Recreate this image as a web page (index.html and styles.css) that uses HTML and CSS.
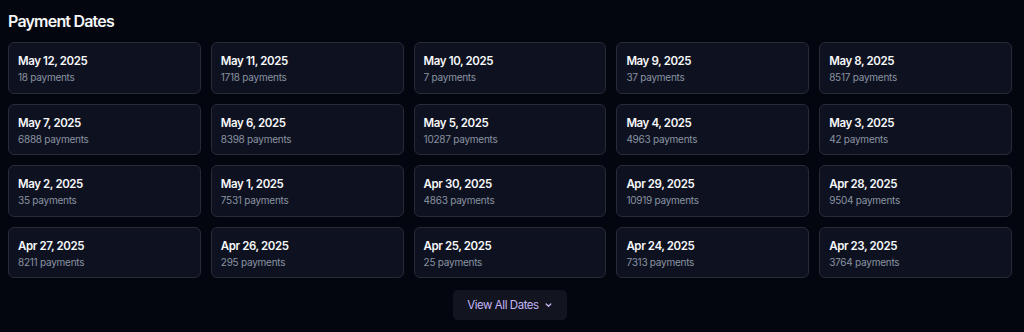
FILE: index.html
```html
<!DOCTYPE html>
<html>
<head>
<meta charset="utf-8">
<link rel="stylesheet" href="styles.css">
</head>
<body>
<section class="dates">
  <h2 class="title">Payment Dates</h2>
  <div class="grid">
    <div class="card"><div class="date">May 12, 2025</div><div class="count">18 payments</div></div>
    <div class="card"><div class="date">May 11, 2025</div><div class="count">1718 payments</div></div>
    <div class="card"><div class="date">May 10, 2025</div><div class="count">7 payments</div></div>
    <div class="card"><div class="date">May 9, 2025</div><div class="count">37 payments</div></div>
    <div class="card"><div class="date">May 8, 2025</div><div class="count">8517 payments</div></div>
    <div class="card"><div class="date">May 7, 2025</div><div class="count">6888 payments</div></div>
    <div class="card"><div class="date">May 6, 2025</div><div class="count">8398 payments</div></div>
    <div class="card"><div class="date">May 5, 2025</div><div class="count">10287 payments</div></div>
    <div class="card"><div class="date">May 4, 2025</div><div class="count">4963 payments</div></div>
    <div class="card"><div class="date">May 3, 2025</div><div class="count">42 payments</div></div>
    <div class="card"><div class="date">May 2, 2025</div><div class="count">35 payments</div></div>
    <div class="card"><div class="date">May 1, 2025</div><div class="count">7531 payments</div></div>
    <div class="card"><div class="date">Apr 30, 2025</div><div class="count">4863 payments</div></div>
    <div class="card"><div class="date">Apr 29, 2025</div><div class="count">10919 payments</div></div>
    <div class="card"><div class="date">Apr 28, 2025</div><div class="count">9504 payments</div></div>
    <div class="card"><div class="date">Apr 27, 2025</div><div class="count">8211 payments</div></div>
    <div class="card"><div class="date">Apr 26, 2025</div><div class="count">295 payments</div></div>
    <div class="card"><div class="date">Apr 25, 2025</div><div class="count">25 payments</div></div>
    <div class="card"><div class="date">Apr 24, 2025</div><div class="count">7313 payments</div></div>
    <div class="card"><div class="date">Apr 23, 2025</div><div class="count">3764 payments</div></div>
  </div>
  <div class="more">
    <button class="more-btn">View All Dates
      <svg class="chev" width="7" height="6" viewBox="0 0 7 6"><path d="M1.2 2l2.3 2.2L5.8 2" fill="none" stroke="currentColor" stroke-width="1.3" stroke-linecap="round" stroke-linejoin="round"/></svg>
    </button>
  </div>
</section>
</body>
</html>
```
FILE: styles.css
```css
html, body {
  margin: 0;
  background: #04060f;
}
body {
  padding: 11px 12px 0 8px;
  font-family: Inter, "Noto Sans", sans-serif;
  color: #f3f4f6;
}
.title {
  margin: 0 0 11px;
  font-size: 16px;
  line-height: 20px;
  font-weight: 600;
  letter-spacing: -0.8px;
  color: #f5f6f8;
}
.grid {
  display: grid;
  grid-template-columns: repeat(5, 1fr);
  gap: 10px;
}
.card {
  height: 51.5px;
  box-sizing: border-box;
  background: #0e1220;
  border: 1px solid #262b38;
  border-radius: 6px;
  padding: 11px 9px 0;
}
.date {
  font-size: 11.5px;
  line-height: 15px;
  font-weight: 600;
  letter-spacing: -0.4px;
  color: #f7f8fa;
}
.count {
  margin-top: 2px;
  font-size: 10px;
  line-height: 13px;
  letter-spacing: -0.25px;
  color: #8a92a2;
}
.more {
  display: flex;
  justify-content: center;
  margin-top: 12px;
}
.more-btn {
  display: flex;
  align-items: center;
  gap: 6px;
  height: 30px;
  padding: 0 15px 0 14px;
  background: #12141f;
  border: none;
  border-radius: 5px;
  font-family: Inter, "Noto Sans", sans-serif;
  font-size: 11.5px;
  letter-spacing: -0.45px;
  color: #c5b5f5;
}
.chev {
  display: block;
}
```
